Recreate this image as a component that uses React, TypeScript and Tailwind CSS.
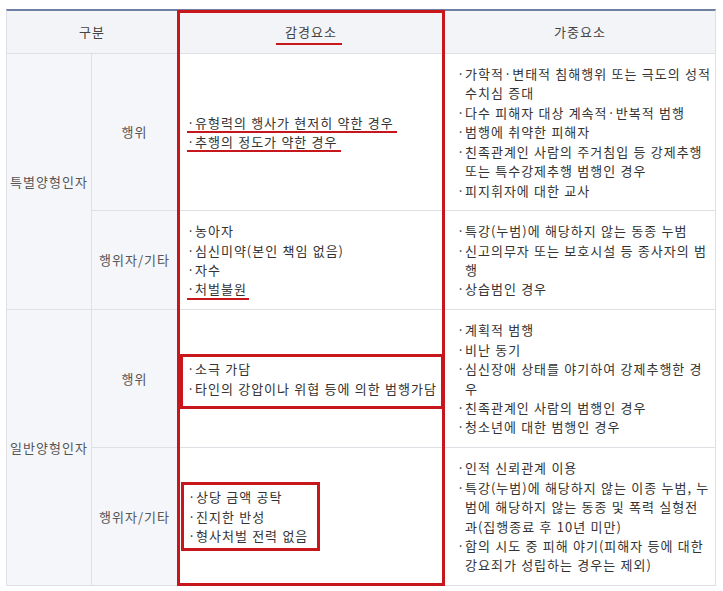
import React from "react";

const RED = "bg-[#c8161d]";

type Line = string[];

function Bullet({ lines, under, underRight = -3 }: { lines: Line; under?: boolean; underRight?: number }) {
  return (
    <div className="flex">
      <div className={under ? "relative flex" : "flex"}>
        <span className="w-[8px] shrink-0 text-left tracking-normal">·</span>
        <div>
          {lines.map((l, i) => (
            <div key={i} className="whitespace-nowrap">
              {l}
            </div>
          ))}
        </div>
        {under && (
          <span
            className={`absolute left-[0px] bottom-[-1px] h-[2px] ${RED}`}
            style={{ right: underRight }}
          />
        )}
      </div>
    </div>
  );
}

const r1: Line[] = [
  ["가학적·변태적 침해행위 또는 극도의 성적", "수치심 증대"],
  ["다수 피해자 대상 계속적·반복적 범행"],
  ["범행에 취약한 피해자"],
  ["친족관계인 사람의 주거침입 등 강제추행", "또는 특수강제추행 범행인 경우"],
  ["피지휘자에 대한 교사"],
];
const r2: Line[] = [
  ["특강(누범)에 해당하지 않는 동종 누범"],
  ["신고의무자 또는 보호시설 등 종사자의 범", "행"],
  ["상습범인 경우"],
];
const r3: Line[] = [
  ["계획적 범행"],
  ["비난 동기"],
  ["심신장애 상태를 야기하여 강제추행한 경", "우"],
  ["친족관계인 사람의 범행인 경우"],
  ["청소년에 대한 범행인 경우"],
];
const r4: Line[] = [
  ["인적 신뢰관계 이용"],
  ["특강(누범)에 해당하지 않는 이종 누범, 누", "범에 해당하지 않는 동종 및 폭력 실형전", "과(집행종료 후 10년 미만)"],
  ["합의 시도 중 피해 야기(피해자 등에 대한", "강요죄가 성립하는 경우는 제외)"],
];

function Agg({ items }: { items: Line[] }) {
  return (
    <div className="bg-white flex flex-col justify-center pl-[12px] text-[#333]">
      {items.map((l, i) => (
        <Bullet key={i} lines={l} />
      ))}
    </div>
  );
}

function Label({ children, className = "" }: { children: React.ReactNode; className?: string }) {
  return (
    <div className={`bg-[#f5f6fa] flex items-center justify-center text-[#555] ${className}`}>{children}</div>
  );
}

export default function App() {
  return (
    <div
      className="pt-[9px] pl-[6px] bg-white min-h-[591px] text-[13px] leading-[19.4px] tracking-[1px] [word-spacing:0.4px]"
      style={{ fontFamily: '"Noto Sans CJK KR", "Malgun Gothic", sans-serif' }}
    >
      <div className="relative w-[710px]">
        <div className="grid w-[710px] grid-cols-[84px_85px_266px_270px] grid-rows-[42px_156px_98px_137px_137px] gap-px bg-[#dfe0e5] border border-[#dfe0e5] border-t-2 border-t-[#7080a2]">
          {/* header */}
          <div className="col-span-2 bg-[#f3f4f8] flex items-center justify-center text-[#444]">구분</div>
          <div className="bg-[#f3f4f8] flex items-center justify-center text-[#444]">
            <span className="relative">
              감경요소
              <span className={`absolute left-[-9px] right-[-5px] bottom-[-3px] h-[2px] ${RED}`} />
            </span>
          </div>
          <div className="bg-[#f3f4f8] flex items-center justify-center text-[#444]">가중요소</div>

          {/* 특별양형인자 */}
          <Label className="row-span-2">특별양형인자</Label>
          <Label>행위</Label>
          <div className="bg-white flex flex-col justify-center pl-[9px] text-[#333]">
            <Bullet lines={["유형력의 행사가 현저히 약한 경우"]} under />
            <Bullet lines={["추행의 정도가 약한 경우"]} under />
          </div>
          <Agg items={r1} />

          <Label>행위자/기타</Label>
          <div className="bg-white flex flex-col justify-center pl-[9px] text-[#333]">
            <Bullet lines={["농아자"]} />
            <Bullet lines={["심신미약(본인 책임 없음)"]} />
            <Bullet lines={["자수"]} />
            <Bullet lines={["처벌불원"]} under underRight={-2} />
          </div>
          <Agg items={r2} />

          {/* 일반양형인자 */}
          <Label className="row-span-2">일반양형인자</Label>
          <Label>행위</Label>
          <div className="bg-white flex flex-col justify-center pt-[6px] text-[#333]">
            <div className="ml-[2px] border-[3px] border-[#c8161d] pl-[4px] pt-[2px] pb-[8px]">
              <Bullet lines={["소극 가담"]} />
              <Bullet lines={["타인의 강압이나 위협 등에 의한 범행가담"]} />
            </div>
          </div>
          <Agg items={r3} />

          <Label>행위자/기타</Label>
          <div className="bg-white flex flex-col justify-center text-[#333]">
            <div className="ml-[3px] w-[139px] border-[3px] border-[#c8161d] pl-[4px] py-[2px]">
              <Bullet lines={["상당 금액 공탁"]} />
              <Bullet lines={["진지한 반성"]} />
              <Bullet lines={["형사처벌 전력 없음"]} />
            </div>
          </div>
          <Agg items={r4} />
        </div>

        {/* outer red annotation box */}
        <div className="absolute left-[171px] top-[1px] w-[268px] h-[576px] border-[3px] border-[#c8161d] pointer-events-none" />
      </div>
    </div>
  );
}
